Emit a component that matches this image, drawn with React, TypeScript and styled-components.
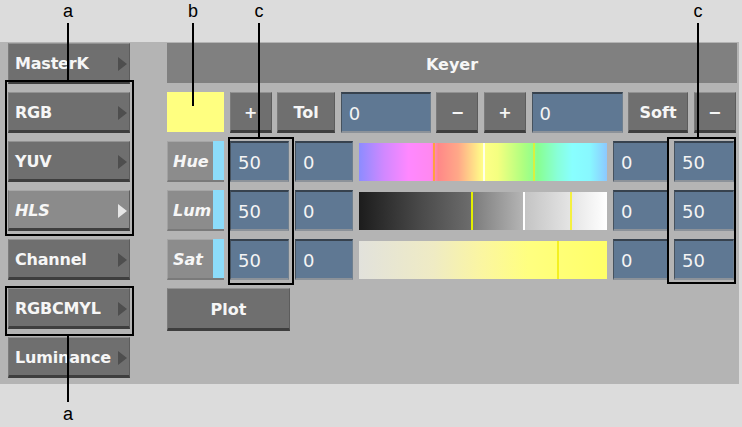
import React from "react";
import styled, { createGlobalStyle } from "styled-components";

const Global = createGlobalStyle`
  html, body { margin: 0; padding: 0; background: #dcdcdc; }
  body { font-family: "DejaVu Sans", sans-serif; }
`;

const Root = styled.div`
  position: relative;
  width: 742px;
  height: 427px;
  background: #dcdcdc;
  overflow: hidden;
`;

const TopBand = styled.div`
  height: 42px;
`;

const Panel = styled.div`
  box-sizing: border-box;
  width: 739px;
  height: 342px;
  background: #b4b4b4;
  display: flex;
  gap: 37px;
  padding: 1px 0 0 8px;
`;

const SideColumn = styled.div`
  width: 122px;
  display: flex;
  flex-direction: column;
  gap: 8px;
`;

const MainColumn = styled.div`
  width: 570px;
  display: flex;
  flex-direction: column;
  gap: 8px;
`;

const bevel = `
  box-sizing: border-box;
  border-top: 1px solid #929292;
  border-left: 1px solid #7c7c7c;
  border-right: 1px solid #5c5c5c;
  border-bottom: 3px solid #3e3e3e;
  padding-top: 2px;
`;

const SideButton = styled.div<{ $active?: boolean }>`
  ${bevel}
  height: 41px;
  display: flex;
  align-items: center;
  padding-left: 6px;
  padding-right: 2px;
  background: ${(p) => (p.$active ? "#8b8b8b" : "#6f6f6f")};
  border-top-color: ${(p) => (p.$active ? "#a8a8a8" : "#929292")};
  color: #f6f6f6;
  font: ${(p) => (p.$active ? "italic bold" : "bold")} 16px "DejaVu Sans", sans-serif;
  letter-spacing: -0.2px;
`;

const Arrow = styled.span<{ $active?: boolean }>`
  margin-left: auto;
  width: 0;
  height: 0;
  border-top: 7px solid transparent;
  border-bottom: 7px solid transparent;
  border-left: 9px solid ${(p) => (p.$active ? "#e6e6e6" : "#4e4e4e")};
`;

const Header = styled.div`
  box-sizing: border-box;
  height: 40px;
  margin-bottom: 1px;
  padding-top: 2px;
  background: #808080;
  display: flex;
  align-items: center;
  justify-content: center;
  color: #f6f6f6;
  font: bold 16px "DejaVu Sans", sans-serif;
`;

const ToolRow = styled.div`
  height: 41px;
  display: grid;
  grid-template-columns: 57px 42px 58px 90px 42px 42px 91px 60px 42px;
  column-gap: 5.6px;
`;

const ChannelRow = styled.div`
  height: 41px;
  display: grid;
  grid-template-columns: 57px 59px 58px 248px 55px 60px;
  column-gap: 6px;
`;

const Swatch = styled.div`
  background: #ffff80;
  margin-bottom: 1px;
`;

const Button = styled.div`
  ${bevel}
  background: #6f6f6f;
  display: flex;
  align-items: center;
  justify-content: center;
  color: #f6f6f6;
  font: bold 16px "DejaVu Sans", sans-serif;
`;

const PlotButton = styled(Button)`
  height: 43px;
  width: 123px;
`;

const Field = styled.div`
  box-sizing: border-box;
  background: #5f7893;
  border-top: 2px solid #37424e;
  border-left: 1px solid #46525e;
  border-right: 1px solid #6f8090;
  border-bottom: 2px solid #8c9299;
  display: flex;
  align-items: center;
  padding-left: 7px;
  padding-top: 1px;
  color: #f4f4f4;
  font: 18px "DejaVu Sans", sans-serif;
`;

const LabelCell = styled.div`
  display: flex;
`;

const ChannelLabel = styled.div`
  box-sizing: border-box;
  flex: 1;
  background: #8c8c8c;
  border-top: 1px solid #a6a6a6;
  border-left: 1px solid #a2a2a2;
  border-bottom: 2px solid #7a7a7a;
  display: flex;
  align-items: center;
  padding-left: 5px;
  padding-top: 1px;
  color: #f6f6f6;
  font: italic bold 16px "DejaVu Sans", sans-serif;
`;

const CyanStrip = styled.div`
  width: 11px;
  background: #8cdcfa;
  border-bottom: 2px solid #7a7a7a;
`;

const GradientBar = styled.div<{ $bg: string }>`
  position: relative;
  margin: 2px 0 1px;
  background: ${(p) => p.$bg};
`;

const Marker = styled.div<{ $pos: number; $color: string }>`
  position: absolute;
  top: 0;
  bottom: 0;
  left: ${(p) => p.$pos}%;
  width: 2px;
  background: ${(p) => p.$color};
`;

const CalloutLabel = styled.div<{ $x: number; $y: number }>`
  position: absolute;
  left: ${(p) => p.$x - 10}px;
  top: ${(p) => p.$y}px;
  width: 20px;
  text-align: center;
  font: 18px/18px "Liberation Sans", Arial, sans-serif;
  color: #000;
`;

const CalloutLine = styled.div<{ $x: number; $y1: number; $y2: number }>`
  position: absolute;
  left: ${(p) => p.$x - 1}px;
  top: ${(p) => p.$y1}px;
  height: ${(p) => p.$y2 - p.$y1}px;
  width: 2px;
  background: #000;
`;

const CalloutBox = styled.div<{ $x: number; $y: number; $w: number; $h: number }>`
  position: absolute;
  box-sizing: border-box;
  left: ${(p) => p.$x}px;
  top: ${(p) => p.$y}px;
  width: ${(p) => p.$w}px;
  height: ${(p) => p.$h}px;
  border: 2px solid #000;
`;

const sideItems = [
  { label: "MasterK" },
  { label: "RGB" },
  { label: "YUV" },
  { label: "HLS", active: true },
  { label: "Channel" },
  { label: "RGBCMYL" },
  { label: "Luminance" },
];

const channels = [
  {
    label: "Hue",
    bg: "linear-gradient(to right, #8c8cff 0%, #d088ff 10%, #ff88ff 20%, #ff88f0 29%, #ff8888 32%, #ffa888 40%, #ffff88 50%, #f4ff80 56%, #b0ff80 66%, #88ff90 72%, #88ffd8 80%, #88ffff 86%, #88f8ff 93%, #8cc8ff 100%)",
    markers: [
      { pos: 30, color: "#ffa040" },
      { pos: 50, color: "#ffffe8" },
      { pos: 70, color: "#d8f040" },
    ],
  },
  {
    label: "Lum",
    bg: "linear-gradient(to right, #1c1c1c 0%, #4a4a4a 25%, #6c6c6c 45%, #7c7c7c 46%, #b4b4b4 66%, #c4c4c4 67%, #e4e4e4 85%, #ffffff 100%)",
    markers: [
      { pos: 45, color: "#e4f000" },
      { pos: 66, color: "#ffffff" },
      { pos: 85, color: "#f4f040" },
    ],
  },
  {
    label: "Sat",
    bg: "linear-gradient(to right, #e2e2dc 0%, #efebc4 30%, #fbf6a0 50%, #ffff80 68%, #ffff68 100%)",
    markers: [{ pos: 80, color: "#f4f020" }],
  },
];

export default function App() {
  return (
    <Root>
      <Global />
      <TopBand />
      <Panel>
        <SideColumn>
          {sideItems.map((s) => (
            <SideButton key={s.label} $active={s.active}>
              {s.label}
              <Arrow $active={s.active} />
            </SideButton>
          ))}
        </SideColumn>
        <MainColumn>
          <Header>Keyer</Header>
          <ToolRow>
            <Swatch />
            <Button>+</Button>
            <Button>Tol</Button>
            <Field>0</Field>
            <Button>−</Button>
            <Button>+</Button>
            <Field>0</Field>
            <Button>Soft</Button>
            <Button>−</Button>
          </ToolRow>
          {channels.map((c) => (
            <ChannelRow key={c.label}>
              <LabelCell>
                <ChannelLabel>{c.label}</ChannelLabel>
                <CyanStrip />
              </LabelCell>
              <Field>50</Field>
              <Field>0</Field>
              <GradientBar $bg={c.bg}>
                {c.markers.map((m) => (
                  <Marker key={m.pos} $pos={m.pos} $color={m.color} />
                ))}
              </GradientBar>
              <Field>0</Field>
              <Field>50</Field>
            </ChannelRow>
          ))}
          <PlotButton>Plot</PlotButton>
        </MainColumn>
      </Panel>

      <CalloutLabel $x={68} $y={2}>a</CalloutLabel>
      <CalloutLine $x={68} $y1={23} $y2={80} />
      <CalloutBox $x={5} $y={80} $w={129} $h={156} />

      <CalloutBox $x={5} $y={286} $w={129} $h={50} />
      <CalloutLine $x={68} $y1={335} $y2={402} />
      <CalloutLabel $x={68} $y={405}>a</CalloutLabel>

      <CalloutLabel $x={193} $y={2}>b</CalloutLabel>
      <CalloutLine $x={193} $y1={23} $y2={106} />

      <CalloutLabel $x={259} $y={2}>c</CalloutLabel>
      <CalloutLine $x={259} $y1={23} $y2={138} />
      <CalloutBox $x={228} $y={137} $w={66} $h={148} />

      <CalloutLabel $x={698} $y={2}>c</CalloutLabel>
      <CalloutLine $x={698} $y1={23} $y2={138} />
      <CalloutBox $x={667} $y={137} $w={69} $h={147} />
    </Root>
  );
}
